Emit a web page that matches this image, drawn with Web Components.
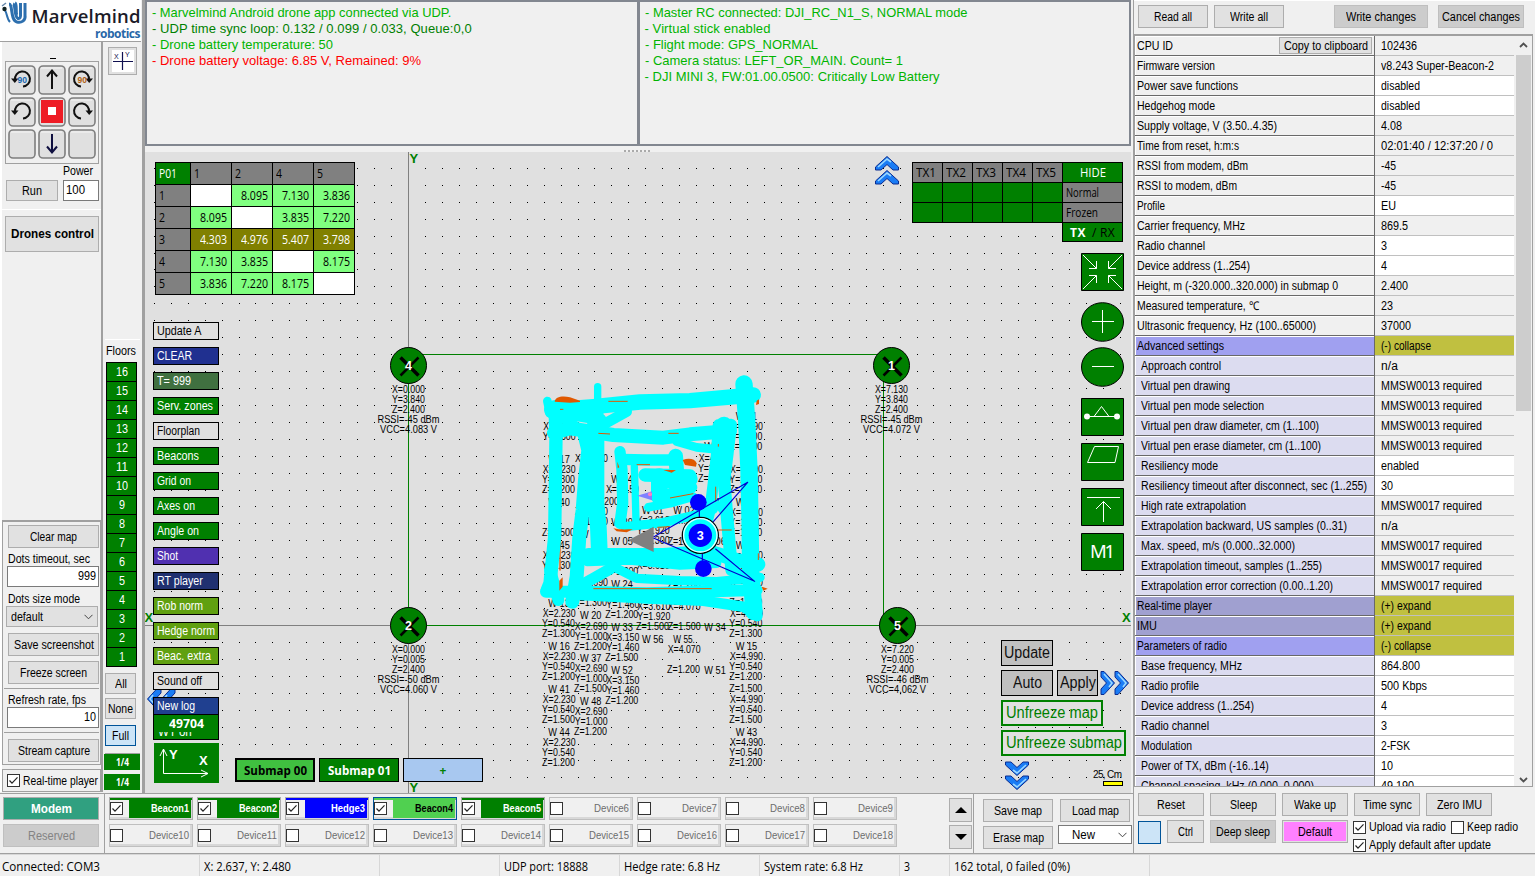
<!DOCTYPE html>
<html lang="en"><head><meta charset="utf-8"><title>Marvelmind Dashboard</title>
<style>html,body{margin:0;width:1535px;height:876px;overflow:hidden;background:#f0f0f0;font:12px "Liberation Sans",sans-serif;color:#000}</style></head>
<body><dash-app></dash-app>
<script>
const make=(name,css,html)=>customElements.define(name,class extends HTMLElement{
  connectedCallback(){if(this.shadowRoot)return;
    this.attachShadow({mode:'open'}).innerHTML=`<style>*{box-sizing:border-box}${css}</style>`+(typeof html==='function'?html(this):html);}});
const ctx=document.createElement('canvas').getContext('2d');
// text set to an exact width: condensed when too long, tracked when too short
customElements.define('f-t',class extends HTMLElement{
  connectedCallback(){if(this.shadowRoot)return;
    const s=getComputedStyle(this),t=this.textContent,w=+this.getAttribute('w');
    ctx.font=`${s.fontWeight} ${s.fontSize} ${s.fontFamily}`;
    const n=ctx.measureText(t).width,k=w&&w<n?w/n:1,ls=w>n?(w-n)/t.length:0;
    this.attachShadow({mode:'open'}).innerHTML=`<style>:host{display:inline-block;white-space:pre;${w?`width:${w}px;`:''}text-align:left}span{display:inline-block;transform-origin:0 50%;${k<1?`transform:scaleX(${k.toFixed(4)});`:''}letter-spacing:${ls.toFixed(3)}px}</style><span><slot></slot></span>`;}});
const t=(s,w)=>`<f-t${w?` w="${w}"`:''}>${s}</f-t>`;
make('w-btn',`:host{display:flex;align-items:center;justify-content:center;box-sizing:border-box;border:1px solid #adadad;background:#e1e1e1;height:23px;flex:none;overflow:hidden}
:host([dim]){background:#ccc;border-color:#bfbfbf}:host([blue]){background:#cce4f7;border-color:#005499}`,'<slot></slot>');
make('w-check',`:host{display:flex;align-items:center;gap:3px}svg{flex:none}`,h=>`<svg width="13" height="13"><rect x=".5" y=".5" width="12" height="12" fill="#fff" stroke="#333"/>${h.hasAttribute('on')?'<path d="M2.5 6.5L5 9.2L10.5 3.3" fill="none" stroke="#222" stroke-width="1.2"/>':''}</svg><slot></slot>`);
make('w-input',`:host{display:flex;align-items:center;justify-content:flex-end;box-sizing:border-box;height:21px;border:1px solid #7a7a7a;background:#fff;padding:0 2px 2px}:host([left]){justify-content:flex-start}`,'<slot></slot>');
make('w-select',`:host{display:flex;align-items:center;justify-content:space-between;box-sizing:border-box;height:21px;border:1px solid #adadad;background:#e1e1e1;padding:0 4px}:host([white]){background:#fff;border-color:#7a7a7a;height:19px;padding-left:13px}`,'<slot></slot><svg width="9" height="6"><path d="M.5 .8L4.5 4.8L8.5 .8" fill="none" stroke="#444"/></svg>');

make('brand-logo',`:host{display:block;width:141px;height:42px;background:#fff;border-bottom:1px solid #a0a0a0}`,
`<svg width="141" height="41"><g fill="none" stroke="#2d6fae" stroke-width="3"><path d="M9 4C13 4 10 20 17 22C21 23 26 21 25 15V3"/><path d="M13 4C16 5 14 17 18 18.500Q21 19 20.500 14V3"/><path d="M15 3C17.500 4 15 14 17.500 15"/><path d="M4 10C7 10 6 18 10 22" stroke-width="2"/></g><path d="M2 6L6 3" stroke="#68a" stroke-width="1.500"/><circle cx="4.500" cy="9" r="2.200" fill="#122"/>
<text x="31.500" y="23" font-family="Open Sans,sans-serif" font-weight="600" font-size="18.500" fill="#1c1c28" textLength="109">Marvelmind</text><text x="95" y="38" font-family="Open Sans,sans-serif" font-weight="700" font-size="12" fill="#2868a8" textLength="45.500">robotics</text></svg>`);

const key=g=>`<svg width="28" height="30"><rect x="1" y="1" width="26" height="28" rx="4" fill="#e0e0e0" stroke="#7e7e7e" stroke-width="1.600"/><path d="M3 3H24" stroke="#f6f6f6"/>${g}</svg>`;
const arc='<path d="M7 15A7.500 7.500 0 1 1 15 21.500" fill="none" stroke="#111" stroke-width="2"/><path d="M3 13.500H10.500L6.800 18Z" fill="#111"/>';
const L=arc,R=`<g transform="translate(28 0) scale(-1 1)">${arc}</g>`;
const n90=c=>`<text x="9.500" y="17.500" font-size="8.500" font-weight="700" fill="${c}" textLength="9.500">90</text>`;
make('joy-pad',`:host{display:grid;grid-template-columns:repeat(3,28px);gap:1px 2px;padding:3px 2px;border:1px solid #a0a0a0;width:94px;height:103px;box-sizing:border-box;margin-left:3px}`,
 key(L+n90('#1668b0'))+key('<path d="M14 24V6M9 11.500L14 5.500L19 11.500" fill="none" stroke="#111" stroke-width="2"/>')+key(R+n90('#b06010'))+
 key(L)+key('<rect x="3" y="3" width="22" height="23" fill="#ee1c25"/><rect x="10" y="10" width="8" height="8" fill="#fff"/>')+key(R)+
 key('')+key('<path d="M14 5V23M9 17.500L14 23.500L19 17.500" fill="none" stroke="#101040" stroke-width="2"/>')+key(''));
make('side-left',`:host{display:block;flex:none;width:101px;height:750px;border-left:2px solid #fff;box-sizing:content-box}
.joy{height:167px;padding-top:16px}.dash{width:6px;height:1px;background:#000;margin:0 0 2px 48px}.pw{margin:0 0 0 61px;height:14px}.r{display:flex;margin:2px 0 0 4px;gap:5px}
.dr{height:311px;border-top:1px solid #fff;padding:6px 3px}.set{height:245px;border:1px solid #a0a0a0;border-top-width:2px;padding:3px 1px 0 4px}
.lb{height:18px;padding-top:4px;margin-left:1px}.sep{height:1px;background:#a0a0a0;margin:4px 0 4px -3px}.rt{display:flex;height:23px;margin-top:4px;border:1px solid #a0a0a0;padding-left:4px}`,
`<div class="joy"><div class="dash"></div><joy-pad></joy-pad><div class="pw">${t('Power',30)}</div><div class="r"><w-btn style="width:52px;height:21px">${t('Run',20)}</w-btn><w-input left style="width:36px">${t('100',19)}</w-input></div></div>
<div class="dr"><w-btn style="width:94px;height:36px;font-weight:700">${t('Drones control',83)}</w-btn></div>
<div class="set"><w-btn style="margin-left:1px">${t('Clear map',47)}</w-btn><div class="lb">${t('Dots timeout, sec',82)}</div><w-input>${t('999',18)}</w-input><div class="lb" style="height:19px;padding-top:5px">${t('Dots size mode',72)}</div><w-select style="margin:0 1px 0 -1px">${t('default',32)}</w-select>
<w-btn style="margin:6px 0 5px 1px">${t('Save screenshot',80)}</w-btn><w-btn style="margin-left:1px">${t('Freeze screen',67)}</w-btn><div class="sep"></div><div class="lb" style="padding-top:0;height:14px">${t('Refresh rate, fps',78)}</div><w-input>${t('10',12)}</w-input><div class="sep"></div><w-btn style="margin:6px 0 0 1px">${t('Stream capture',72)}</w-btn></div>
<div class="rt"><w-check on>${t('Real-time player',75)}</w-check></div>`);
make('floor-bar',`:host{display:block;flex:none;width:39px;height:750px;box-sizing:border-box;border-left:2px solid #a0a0a0;padding-left:2px}
.xy{width:29px;height:28px;margin:5px 0 0 3px}.fl{margin-top:264px;border-top:1px solid #fff;height:23px;padding:4px 0 0 1px;box-sizing:border-box}
.c{height:20px;margin:0 0 -1px 1px;width:31px;border:1px solid #000;background:#008000;color:#fff;display:flex;align-items:center;justify-content:center}
w-btn{width:31px;height:21px;margin-left:0}.q{width:36px;margin-left:-1px;height:16px;background:#008000;color:#fff;display:flex;align-items:center;justify-content:center;font:700 10px "Open Sans",sans-serif}`,
`<w-btn class="xy"><svg width="22" height="22"><rect width="22" height="22" fill="#fff"/><path d="M1 11.500H21M10.500 2V20" stroke="#101050" stroke-width="1.200"/><text x="2" y="9" font-size="7" fill="#101050">X</text><text x="13" y="7" font-size="7" fill="#101050">Y</text></svg></w-btn>
<div class="fl">${t('Floors',30)}</div>${[...Array(16)].map((_,i)=>`<div class="c">${t(16-i,i<7?12:6)}</div>`).join('')}
<w-btn style="margin-top:7px">${t('All',12)}</w-btn><w-btn style="margin-top:4px">${t('None',25)}</w-btn><w-btn blue style="margin-top:6px">${t('Full',17)}</w-btn>
<div style="height:8px;border-bottom:1px solid #a0a0a0"></div><div class="q">${t('1/4',13)}</div><div class="q" style="margin-top:4px">${t('1/4',13)}</div>`);

make('log-pane',`:host{display:block;flex:1;box-sizing:border-box;border:2px solid #828790;height:146px;padding:3px 5px;font-size:13px;line-height:16px;color:#00b400}div{height:16px;white-space:nowrap}`,'<slot></slot>');

const cell=(v,bg,c,a='flex-end')=>`<div style="background:${bg};color:${c};justify-content:${a}">${v}</div>`;
make('dist-table',`:host{display:grid;grid-template:repeat(6,22px)/35px repeat(4,41px);border:solid #000;border-width:1px 0 0 1px;font:12px "Open Sans",sans-serif;color:#000}
div{border:solid #000;border-width:0 1px 1px 0;display:flex;align-items:center;padding:0 4px 1px 3px}`,
()=>{let o=cell(t('P01',18),'#008000','#fff','flex-start');for(const c of [1,2,4,5])o+=cell(t(c,6),'#808080','#000','flex-start');
const D=[['',8.095,'7.130',3.836],[8.095,'',3.835,'7.220'],[4.303,4.976,5.407,3.798],['7.130',3.835,'',8.175],[3.836,'7.220',8.175,'']];
D.forEach((r,i)=>{o+=cell(t(i+1,6),'#808080','#000','flex-start');r.forEach(v=>o+=cell(v===''?'':t(v,27),v===''?'#fff':i==2?'#808000':'#80ff80',i==2?'#fff':'#000'))});return o});
make('tx-table',`:host{display:grid;grid-template:20px 20px 20px 19px/repeat(5,30px) 60px;font:12px "Open Sans",sans-serif}
div{outline:1px solid #000;margin:1px 0 0 1px;background:#008000;display:flex;align-items:center;justify-content:center}.g{background:#808080}.l{justify-content:flex-start;padding-left:3px}.x{grid-column:6;color:#000}`,
[1,2,3,4,5].map(i=>`<div class="g" style="padding-right:3px">${t('TX'+i,20)}</div>`).join('')+`<div style="color:#fff">${t('HIDE',26)}</div>`+'<div></div>'.repeat(5)+`<div class="g l">${t('Normal',33)}</div>`+'<div></div>'.repeat(5)+`<div class="g l">${t('Frozen',32)}</div><div class="x"><b style="color:#fff;margin-right:6px">${t('TX',16)}</b>${t('/ RX',23)}</div>`);
make('map-tools',`:host{display:flex;flex-direction:column;gap:7px;width:66px}div{height:18px;border:1px solid #000;padding-left:3px;display:flex;align-items:center;font:12px "Liberation Sans",sans-serif}`,
()=>[['Update A',45,'#e0e0e0','#000'],['CLEAR',35,'#203090'],['T= 999',34,'#407040'],['Serv. zones',56,'#008000'],['Floorplan',43,'#e0e0e0','#000'],['Beacons',42,'#008000'],['Grid on',34,'#008000'],['Axes on',38,'#008000'],['Angle on',42,'#008000'],['Shot',21,'#5030b0'],['RT player',46,'#203070'],['Rob norm',46,'#60a010'],['Hedge norm',58,'#60a010'],['Beac. extra',54,'#60a010'],['Sound off',45,'#e0e0e0','#000'],['New log',38,'#204090']].map(([s,w,b,c])=>`<div style="background:${b};color:${c||'#fff'}">${t(s,w)}</div>`).join(''));

make('map-canvas',`:host{display:block;position:relative;width:986px;height:641px;background:#e0e0e0;overflow:hidden}
svg.m{display:block;font-family:"Liberation Sans",sans-serif}.o{position:absolute}
.sub{display:flex;gap:4px;left:90px;top:606px}.sub div{width:80px;height:24px;border:1px solid #000;display:flex;align-items:center;justify-content:center;font:700 12px "Open Sans",sans-serif}
.cnt{left:8px;top:563px;width:66px;height:25px;background:#008000;border:solid #000;border-width:0 1px 1px;color:#fff;overflow:hidden;font:700 12.500px/17px "Open Sans",sans-serif;text-align:center}
.cnt p{margin:-9px 0 0 4px;font:12px/18px "Liberation Sans",sans-serif;text-align:left;clip-path:inset(9px 0 0 0)}
.b{display:flex;align-items:center;justify-content:center;border:1px solid #000;background:#c0c0c0;height:26px;font:16px "Liberation Sans",sans-serif;color:#101010}
.u{border:2px solid #008000;background:none;color:#008000}`,()=>{
 let d='';for(let i=-15;i<=42;i++)for(let j=-27;j<=9;j++){if(!i||!j)continue;const x=Math.round(408+i*16.95),y=Math.round(625+j*16.93);d+=`M${x} ${y+.5}h1`;}
 const tx=(x,y,s,w)=>`<text x="${x}" y="${y}" textLength="${w}" lengthAdjust="spacingAndGlyphs">${s}</text>`;
 const node=(x,y,n,a)=>`<circle cx="${x}" cy="${y}" r="18" fill="#008000" stroke="#000"/><path d="M${x-8} ${y-8}L${x+10} ${y+10}" stroke="#000" stroke-width="3.500"/><path d="M${x+10} ${y-8}L${x-8} ${y+10}" stroke="#000" stroke-width="2.500"/><text x="${x-3.500}" y="${y+4.500}" font-size="12.500" font-weight="700" fill="#fff">${n}</text>`+
  a.map((s,i)=>{const w=i<3?33:i==3?62:57;return tx(x-w/2,y+27.500+i*10,s,w)}).join('');
 const zt=a=>a.map(([x,y,s])=>tx(530+x/3,370+y/3+3.500,s,s[0]=='W'?21.500:s.length*33/7)).join('');
 const P=(p,w)=>`<polyline points="${p}" stroke-width="${w}"/>`;
 const chev=(x,y,r)=>`<g transform="translate(${x} ${y}) rotate(${r})">${[0,14].map(k=>`<path d="M-11.500 ${k+3}L0 ${k-7.500}L11.500 ${k+3}V${k+6}H6L0 ${k+.5}L-6 ${k+6}H-11.500Z" fill="#1a7cf5" stroke="#0a2c90"/><path d="M-9 ${k+3}L0 ${k-5}L4 ${k-2}" fill="none" stroke="#9cd8ff" stroke-width="1.600"/>`).join('')}</g>`;
 const W=[[60,142,'W 12'],[40,170,'X=2.230'],[38,200,'Y=2.300'],[55,268,'W 17'],[38,298,'X=2.230'],[36,328,'Y=2.300'],[36,358,'Z=1.200'],[55,397,'W 40'],[36,487,'Z=1.500'],[55,526,'W 45'],[38,556,'X=2.230'],[36,586,'Y=1.300'],
 [135,265,'X=2.690'],[168,395,'Z=1.200'],[135,425,'Z=1.200'],[135,455,'Z=1.500'],[150,493,'W 28'],[135,637,'X=2.690'],[135,665,'Y=1.000'],[132,698,'Z=1.300'],[150,737,'W 20'],[134,768,'X=2.690'],[134,798,'Y=1.000'],[132,828,'Z=1.200'],[150,866,'W 37'],[134,896,'X=2.690'],[134,925,'Y=1.000'],[132,955,'Z=1.500'],[150,994,'W 48'],[134,1024,'X=2.690'],[134,1055,'Y=1.000'],[132,1084,'Z=1.200'],
 [55,700,'W 13'],[38,730,'X=2.230'],[36,760,'Y=0.540'],[36,791,'Z=1.300'],[55,829,'W 16'],[38,860,'X=2.230'],[36,890,'Y=0.540'],[36,920,'Z=1.200'],[55,959,'W 41'],[38,989,'X=2.230'],[36,1019,'Y=0.540'],[36,1049,'Z=1.500'],[55,1087,'W 44'],[38,1118,'X=2.230'],[36,1148,'Y=0.540'],[36,1178,'Z=1.200'],
 [244,328,'W 24'],[228,358,'X=3.150'],[244,458,'W 29'],[244,514,'W 05'],[226,604,'Z=1.200'],[244,642,'W 24'],[229,703,'Y=1.460'],[226,734,'Z=1.200'],[244,772,'W 33'],[229,803,'X=3.150'],[229,832,'Y=1.460'],[226,863,'Z=1.500'],[244,902,'W 52'],[229,932,'X=3.150'],[229,962,'Y=1.460'],[226,992,'Z=1.200'],
 [336,420,'W 01'],[320,450,'X=3.610'],[320,482,'Y=1.920'],[320,511,'Z=1.300'],[320,585,'X=3.610'],[322,709,'X=3.610'],[322,740,'Y=1.920'],[318,770,'Z=1.500'],[336,808,'W 56'],
 [430,420,'W 02'],[413,450,'X=4.070'],[413,514,'Z=1.500'],[430,583,'W 30'],[413,643,'Z=1.200'],[413,709,'X=4.070'],[413,770,'Z=1.500'],[430,808,'W 55.'],[413,838,'X=4.070'],[411,899,'Z=1.200'],
 [523,228,'W 11'],[506,265,'X=4.530'],[504,295,'Y=2.300'],[504,325,'Z=1.300'],[523,397,'W 10'],[523,515,'W 06'],[523,641,'W 23'],[523,772,'W 34'],[523,901,'W 51'],
 [617,139,'W 21'],[600,170,'X=4.990'],[598,200,'Y=2.300'],[598,230,'Z=1.300'],[600,298,'X=4.990'],[598,328,'Y=2.300'],[598,358,'Z=1.200'],[617,397,'W 39'],[600,427,'X=4.990'],[598,457,'Y=1.300'],[598,487,'Z=1.500'],[617,526,'W 46'],[600,556,'X=4.990'],[598,586,'Y=1.300'],[600,637,'X=4.990'],[598,698,'Z=1.200'],
 [600,730,'X=4.990'],[598,760,'Y=0.540'],[598,791,'Z=1.300'],[617,829,'W 15'],[600,860,'X=4.990'],[598,890,'Y=0.540'],[598,920,'Z=1.200'],[598,955,'Z=1.500'],[600,989,'X=4.990'],[598,1019,'Y=0.540'],[598,1049,'Z=1.500'],[617,1087,'W 43'],[600,1118,'X=4.990'],[598,1148,'Y=0.540'],[598,1178,'Z=1.200']];
 const cy=[['52,93 60,130',26],['65,120 190,110 330,96 480,92 670,75',46],['203,50 203,130',22],['60,128 110,150 160,185',30],['72,188 120,175 250,195 400,203 480,193 600,183',42],['190,180 290,125',32],['120,130 180,140 210,150',40],['75,110 78,200 76,350 74,500 60,640 52,660',40],['165,200 175,240 165,330 158,420 148,500 140,620 127,695',42],['195,120 198,200 198,300 198,400 205,470 208,545',50],
  ['642,42 650,150 657,300 660,450 662,600 672,725',52],['565,165 560,250 550,340 540,420 530,460',34],['582,165 580,200',50],['602,165 592,250 582,330 592,450 605,600',38],['440,215 500,232 560,238',26],['560,400 590,440',20],
  ['270,245 276,300 278,400 270,460',34],['313,290 316,380 318,455',22],['275,268 350,270 440,270',34],['437,258 440,300',44],['345,315 480,318',40],['388,320 388,380',50],['400,330 478,328',50],['385,383 440,365 485,352',34],['355,412 420,400 490,380',26],['285,470 400,458 510,432 550,418',28],
  ['175,555 240,555 400,555 540,545 620,570 685,583',42],['172,575 300,570 450,585 560,580',28],['145,650 190,625 240,597',34],['250,590 320,625 450,632 560,635 690,622',28],['48,665 150,665 350,670 500,665 680,660',36],['150,675 350,685 520,692 640,710 682,738',32],['60,600 85,690',36],['620,605 670,650',30]];
 return `<svg class="m" width="986" height="641" viewBox="145 152 986 641" font-size="10">
 <path d="${d}" stroke="#000"/><path d="M145 625.500H1131M408.500 152V793" stroke="#808080"/><path d="M408.500 365V625.500H897M408.500 354.500H883.500V625" stroke="#008000" fill="none"/>
 <g font-weight="700" font-size="13" fill="#008000"><text x="409.500" y="163">Y</text><text x="409.500" y="792">Y</text><text x="144.500" y="622">X</text><text x="1122" y="622">X</text></g>
 ${zt(W)}
 <g transform="translate(530 370) scale(.33333)" fill="none" stroke-linecap="round" stroke-linejoin="round"><path d="M90 230V600M190 656H545" stroke="#e05800" stroke-width="4"/><g stroke="#0ff">${cy.map(c=>P(...c)).join('')}</g>
 <g fill="#e05800" stroke="none"><path d="M74 95C75 82 95 76 120 82L150 92V96L120 98Z"/><path d="M458 270C475 263 495 265 500 280L498 290L465 285Z"/><path d="M262 275L268 292L263 295ZM400 300H438L425 308Z"/><path d="M250 475C270 480 290 478 308 478L290 487L260 484Z"/><path d="M88 632L98 622V650L88 662ZM680 92L687 88V102L678 105ZM695 650L713 656L700 662Z"/></g>
 <path d="M235 94H293M90 118H100M205 190L240 192M415 190H446M320 284H360M420 384L490 371M190 656H545M382 472L420 470M685 550V570M557 350V395M562 480H605M565 222V230" stroke="#e05800" stroke-width="3" stroke-linecap="butt"/>
 <path d="M322 377L366 364V391Z" fill="#8080ff"/><circle cx="360" cy="373" r="6" fill="#ff80c0"/><path d="M295 511L371 470V546Z" fill="#808080"/>
 <path d="M508 410V445M517 550V590M372 500L653 337L550 455M372 505L674 634L557 537" stroke="#0000d0" stroke-width="3.500"/><circle cx="505" cy="397" r="25" fill="#00f"/><circle cx="520" cy="596" r="25" fill="#00f"/>
 <circle cx="511" cy="496" r="54" fill="#0ff" stroke="#000" stroke-width="4"/><circle cx="511" cy="496" r="50" stroke="#e8ffff" stroke-width="4"/><circle cx="511" cy="496" r="35" fill="#00f"/><text x="500" y="509" font-size="38" font-weight="700" fill="#fff">3</text></g>
 ${node(408.500,365.500,4,['X=0.000','Y=3.840','Z=2.400','RSSI=-45 dBm','VCC=4.083 V'])}${node(891.500,365.500,1,['X=7.130','Y=3.840','Z=2.400','RSSI=-45 dBm','VCC=4.072 V'])}${node(408.500,625.500,2,['X=0.000','Y=0.005','Z=2.400','RSSI=-50 dBm','VCC=4.060 V'])}${node(897.500,625.500,5,['X=7.220','Y=0.005','Z=2.400','RSSI=-46 dBm','VCC=4,062 V'])}
 ${chev(887,164,0)}${chev(1017,782,180)}${chev(1121,683,90)}${chev(155,699,-90)}
 <g fill="#008000" stroke="#000"><path d="M1081.500 253.500h42v37h-42zM1081.500 398.500h42v37h-42zM1081.500 443.500h42v37h-42zM1081.500 488.500h42v37h-42zM1081.500 533.500h42v37h-42z"/><ellipse cx="1102.500" cy="322" rx="21" ry="19.300"/><ellipse cx="1102.500" cy="367" rx="21" ry="19.300"/></g>
 <g fill="none" stroke="#fff"><path d="M1083 255L1096.500 268.500M1089 268.500H1096.500V261M1122 255L1108.500 268.500M1108.500 261V268.500H1116M1083 289L1096.500 275.500M1089 275.500H1096.500V283M1122 289L1108.500 275.500M1116 275.500H1108.500V283"/><path d="M1092 321.500H1114M1102.500 310V333M1092 366.500H1114M1087 416.500H1117M1094 416.500L1101.500 406.500L1109 416.500M1094.500 446.500H1118.500L1115 462.500H1087.500ZM1087 497.500H1120M1103.500 522V501.500M1096 509L1103.500 501.500L1111 509"/></g><circle cx="1087" cy="416.500" r="3" fill="#fff"/><circle cx="1117" cy="416.500" r="3" fill="#fff"/><text x="1090" y="558" font-size="18.500" fill="#fff" textLength="25" font-family="Noto Sans,sans-serif">M1</text>
 <rect x="154" y="743" width="65" height="40" fill="#008000"/><path d="M163.500 749V773.500H208M160 756L163.500 749L167 756M201 770L208 773.500L201 777" fill="none" stroke="#fff"/><g fill="#fff" font-size="13" font-weight="700"><text x="169" y="759">Y</text><text x="199" y="765">X</text></g>
 <text x="1093" y="778" textLength="29">25, Cm</text><rect x="1103.500" y="781.500" width="19" height="4" fill="#ff0" stroke="#000"/>
 </svg>
 <dist-table class="o" style="left:10px;top:10px"></dist-table><tx-table class="o" style="left:767px;top:10px"></tx-table><div class="o cnt">${t('49704',35)}<p>${t('WT on',34)}</p></div><map-tools class="o" style="left:8px;top:170px"></map-tools>
 <div class="o sub"><div style="border-width:2px;background:#40c040">${t('Submap 00',63)}</div><div style="background:#008000;color:#fff">${t('Submap 01',63)}</div><div style="background:#a8c8f0;color:#008000">+</div></div>
 <div class="o b" style="left:856px;top:488px;width:52px">${t('Update',46)}</div><div class="o b" style="left:856px;top:518px;width:52px">${t('Auto',29)}</div><div class="o b" style="left:912px;top:518px;width:41px">${t('Apply',36)}</div><div class="o b u" style="left:856px;top:548px;width:102px">${t('Unfreeze map',92)}</div><div class="o b u" style="left:856px;top:578px;width:125px">${t('Unfreeze submap',116)}</div>`});

make('prop-table',`:host{display:flex;height:753px;margin:0 2px 0 0;border:1px solid #a0a0a0;border-top-width:2px;box-sizing:border-box}
.g{flex:none;width:379px;height:750px;overflow:hidden}.r{display:flex;height:20px}.a{width:240px;border-right:1px solid #696969;border-bottom:1px solid #696969;padding-left:2px;display:flex;align-items:center;box-shadow:inset 0 1px #fff,inset 1px 0 #fff;position:relative}.v{width:139px;border-bottom:1px solid #c0c0c0;padding-left:6px;display:flex;align-items:center}
.r w-btn{height:17px;width:93px;position:absolute;right:2px;top:1px}.s{width:15px;margin-left:2px;display:flex;flex-direction:column;justify-content:space-between;align-items:center}.th{width:15px;height:356px;background:#cdcdcd;margin-bottom:auto;margin-top:4px}svg{margin:6px 0 3px}`,
()=>{const g='#f0f0f0',w='#fff',h='#a0a0f0',k='#a0a0d0',o='#c0c040',s='#dcdcf0';const M=(n)=>[`MMSW00${n} required`,101,g];
const q=[['CPU ID',36,g,'102436',36,g],['Firmware version',78,g,'v8.243 Super-Beacon-2',113,g],['Power save functions',101,g,'disabled',39,w],['Hedgehog mode',78,g,'disabled',39,w],['Supply voltage, V (3.50..4.35)',140,g,'4.08',21,g],['Time from reset, h:m:s',102,g,'02:01:40 / 12:37:20 / 0',112,g],['RSSI from modem, dBm',111,g,'-45',15,g],['RSSI to modem, dBm',100,g,'-45',15,g],['Profile',28,g,'EU',15,w],['Carrier frequency, MHz',108,g,'869.5',27,g],['Radio channel',68,g,'3',6,w],['Device address (1..254)',113,g,'4',6,w],['Height, m (-320.000..320.000) in submap 0',201,g,'2.400',27,g],['Measured temperature, ℃',122,g,'23',12,g],['Ultrasonic frequency, Hz (100..65000)',179,g,'37000',30,g],['Advanced settings',87,h,'(-) collapse',50,o],
['Approach control',80,s,'n/a',17,g],['Virtual pen drawing',89,s,...M(13)],['Virtual pen mode selection',123,s,...M(13)],['Virtual pen draw diameter, cm (1..100)',178,s,...M(13)],['Virtual pen erase diameter, cm (1..100)',180,s,...M(13)],['Resiliency mode',77,s,'enabled',38,w],['Resiliency timeout after disconnect, sec (1..255)',226,s,'30',12,w],['High rate extrapolation',105,s,...M(17)],['Extrapolation backward, US samples (0..31)',206,s,'n/a',17,g],['Max. speed, m/s (0.000..32.000)',154,s,...M(17)],['Extrapolation timeout, samples (1..255)',181,s,...M(17)],['Extrapolation error correction (0.00..1.20)',192,s,...M(17)],['Real-time player',75,k,'(+) expand',50,o],['IMU',20,k,'(+) expand',50,o],['Parameters of radio',90,h,'(-) collapse',50,o],
['Base frequency, MHz',101,s,'864.800',39,w],['Radio profile',58,s,'500 Kbps',46,w],['Device address (1..254)',113,s,'4',6,w],['Radio channel',68,s,'3',6,w],['Modulation',51,s,'2-FSK',29,w],['Power of TX, dBm (-16..14)',128,s,'10',12,w],['Channel spacing, kHz (0.000..0.000)',173,s,'49.190',33,w]];
return '<div class="g">'+q.map((r,i)=>`<div class="r"><div class="a" style="background:${r[2]};${r[2]==s?'padding-left:6px':''}">${t(r[0],r[1])}${i?'':`<w-btn>${t('Copy to clipboard',84)}</w-btn>`}</div><div class="v" style="background:${r[5]}">${t(r[3],r[4])}</div></div>`).join('')+'</div><div class="s"><svg width="9" height="6"><path d="M1 5L4.500 1.500L8 5" fill="none" stroke="#505050" stroke-width="1.800"/></svg><div class="th"></div><svg width="9" height="6"><path d="M1 1L4.500 4.500L8 1" fill="none" stroke="#505050" stroke-width="1.800"/></svg></div>'});
make('device-panel',`:host{display:block;width:402px;height:854px;box-sizing:border-box;border-left:1px solid #a0a0a0;border-bottom:1px solid #a0a0a0}
.top{display:flex;height:34px;padding:4px 0 0 4px;gap:6px;border-top:1px solid #fff}.row{display:flex;gap:6px;padding:0 0 0 4px}.k{display:flex;flex-wrap:wrap;gap:4px 5px;margin-left:-1px;width:180px;height:30px}`,
`<div class="top"><w-btn style="width:70px">${t('Read all',38)}</w-btn><w-btn style="width:70px;margin-right:44px">${t('Write all',38)}</w-btn><w-btn dim style="width:94px;margin-right:4px">${t('Write changes',70)}</w-btn><w-btn dim style="width:86px">${t('Cancel changes',78)}</w-btn></div>
<prop-table></prop-table><div class="row" style="margin-top:6px">${[['Reset',28],['Sleep',27],['Wake up',42],['Time sync',49],['Zero IMU',45]].map(([a,b])=>`<w-btn style="width:66px">${t(a,b)}</w-btn>`).join('')}</div>
<div class="row" style="margin-top:4px"><w-btn blue style="width:23px;margin-top:1px"></w-btn><w-btn style="width:37px">${t('Ctrl',15)}</w-btn><w-btn dim style="width:66px">${t('Deep sleep',54)}</w-btn><w-btn style="width:66px;background:#ff80ff;box-shadow:inset 0 0 0 1px #e1e1e1">${t('Default',34)}</w-btn><div class="k"><w-check on>${t('Upload via radio',77)}</w-check><w-check>${t('Keep radio',51)}</w-check><w-check on>${t('Apply default after update',122)}</w-check></div></div>`);

make('device-chip',`:host{display:flex;width:84px;height:23px;box-sizing:border-box;border:1px solid #bfbfbf;box-shadow:inset -2px -2px #d8d8d8;align-items:center;color:#6d6d6d;font-size:10.500px}.n{flex:1;height:20px;display:flex;align-items:center;justify-content:flex-end;margin:0 1px 0 6px;padding:0 2px 2px 0}:host([on]){border-color:#adadad}:host([on][sel]){border-color:#005499}`,
h=>{const c=h.getAttribute('color');return `${c?`<style>:host{box-shadow:inset 0 2px ${c},inset -2px -2px #d8d8d8}</style>`:''}<w-check ${c?'on':''}></w-check><div class="n" style="${c?`background:${c};color:${h.hasAttribute('sel')?'#000':'#fff'};font-weight:700;height:19px;margin-top:-1px;padding-bottom:0`:''}"><slot></slot></div>`});
make('device-bar',`:host{display:flex;height:61px;width:1133px;border-top:1px solid #a0a0a0;border-bottom:1px solid #a0a0a0;box-sizing:border-box}
.m{width:105px;padding:3px;border-right:1px solid #a0a0a0;margin-right:4px}.m w-btn{width:96px;margin-bottom:4px}.d{display:grid;grid-template-columns:repeat(9,88px);grid-auto-rows:27px;width:840px;padding-top:3px}.ud{padding:4px 2px 0 0;width:25px;border-right:1px solid #a0a0a0}.ud w-btn{width:23px;height:24px;margin-bottom:3px}
.s{display:grid;grid-template-columns:70px 72px;gap:4px 7px;padding:5px 0 0 9px;align-content:start}`,
()=>{const dv=[['Beacon1',38,'#008000'],['Beacon2',38,'#008000'],['Hedge3',34,'#0000ff'],['Beacon4',38,'#50d050'],['Beacon5',38,'#008000']];let o='';for(let i=1;i<=18;i++){const e=dv[i-1];o+=`<device-chip ${e?`on color="${e[2]}"`:''} ${i==4?'sel':''}>${e?t(e[0],e[1]):t('Device'+i,i<10?35:40)}</device-chip>`}
return `<div class="m"><w-btn style="background:#30a080;color:#fff;font-weight:700">${t('Modem',41)}</w-btn><w-btn dim style="color:#838383">${t('Reserved',47)}</w-btn></div><div class="d">${o}</div><div class="ud"><w-btn><svg width="12" height="6"><path d="M0 6L6 0L12 6Z"/></svg></w-btn><w-btn><svg width="12" height="6"><path d="M0 0L6 6L12 0Z"/></svg></w-btn></div>
<div class="s"><w-btn>${t('Save map',48)}</w-btn><w-btn style="width:70px">${t('Load map',47)}</w-btn><w-btn>${t('Erase map',51)}</w-btn><w-select white style="margin-left:-2px;margin-top:-1px;align-self:start">${t('New',23)}</w-select></div>`});
make('status-bar',`:host{display:flex;height:22px;border-top:1px solid #d7d7d7;box-sizing:border-box;font:12px "Open Sans",sans-serif}div{border-right:1px solid #d7d7d7;padding:3px 0 0 3px;height:22px}`,
[['Connected: COM3',98,200],['X: 2.637, Y: 2.480',87,180],['',0,120],['UDP port: 18888',84,120],['Hedge rate: 6.8 Hz',96,140],['System rate: 6.8 Hz',99,140],['3',6,50],['162 total, 0 failed (0%)',116,200]].map(([s,w,b],i)=>`<div style="width:${b}px;padding-left:${i?4:2}px">${s?t(s,w):''}</div>`).join(''));
make('dash-app',`:host{display:grid;grid-template:793px 61px 22px/1133px 402px;width:1535px;height:876px;background:#f0f0f0}
.l{display:flex}.s{width:145px;border-right:3px solid #a0a0a0;height:793px;flex:none}.c{display:flex;height:750px}
.logs{display:flex;height:146px}.sp{height:6px;display:flex;justify-content:center;align-items:flex-end}.sp i{width:28px;height:2px;background:repeating-linear-gradient(90deg,#aaa 0 2px,transparent 2px 4px)}device-panel{grid-row:1/3;grid-column:2}status-bar{grid-column:1/3}`,
`<div class="l"><div class="s"><brand-logo></brand-logo><div class="c"><side-left></side-left><floor-bar></floor-bar></div></div><div style="width:986px"><div class="logs"><log-pane><div>${t('- Marvelmind Android drone app connected via UDP.',300)}</div><div style="color:#008000">${t('- UDP time sync loop: 0.132 / 0.099 / 0.033, Queue:0,0',320)}</div><div>${t('- Drone battery temperature: 50',181)}</div><div style="color:#f00">${t('- Drone battery voltage: 6.85 V, Remained: 9%',269)}</div></log-pane><log-pane style="margin-left:-1px"><div>${t('- Master RC connected: DJI_RC_N1_S, NORMAL mode',323)}</div><div>${t('- Virtual stick enabled',126)}</div><div>${t('- Flight mode: GPS_NORMAL',173)}</div><div>${t('- Camera status: LEFT_OR_MAIN. Count= 1',258)}</div><div>${t('- DJI MINI 3, FW:01.00.0500: Critically Low Battery',295)}</div></log-pane></div><div class="sp"><i></i></div><map-canvas></map-canvas></div></div>
<device-panel></device-panel><device-bar></device-bar><status-bar></status-bar>`);
</script></body></html>
